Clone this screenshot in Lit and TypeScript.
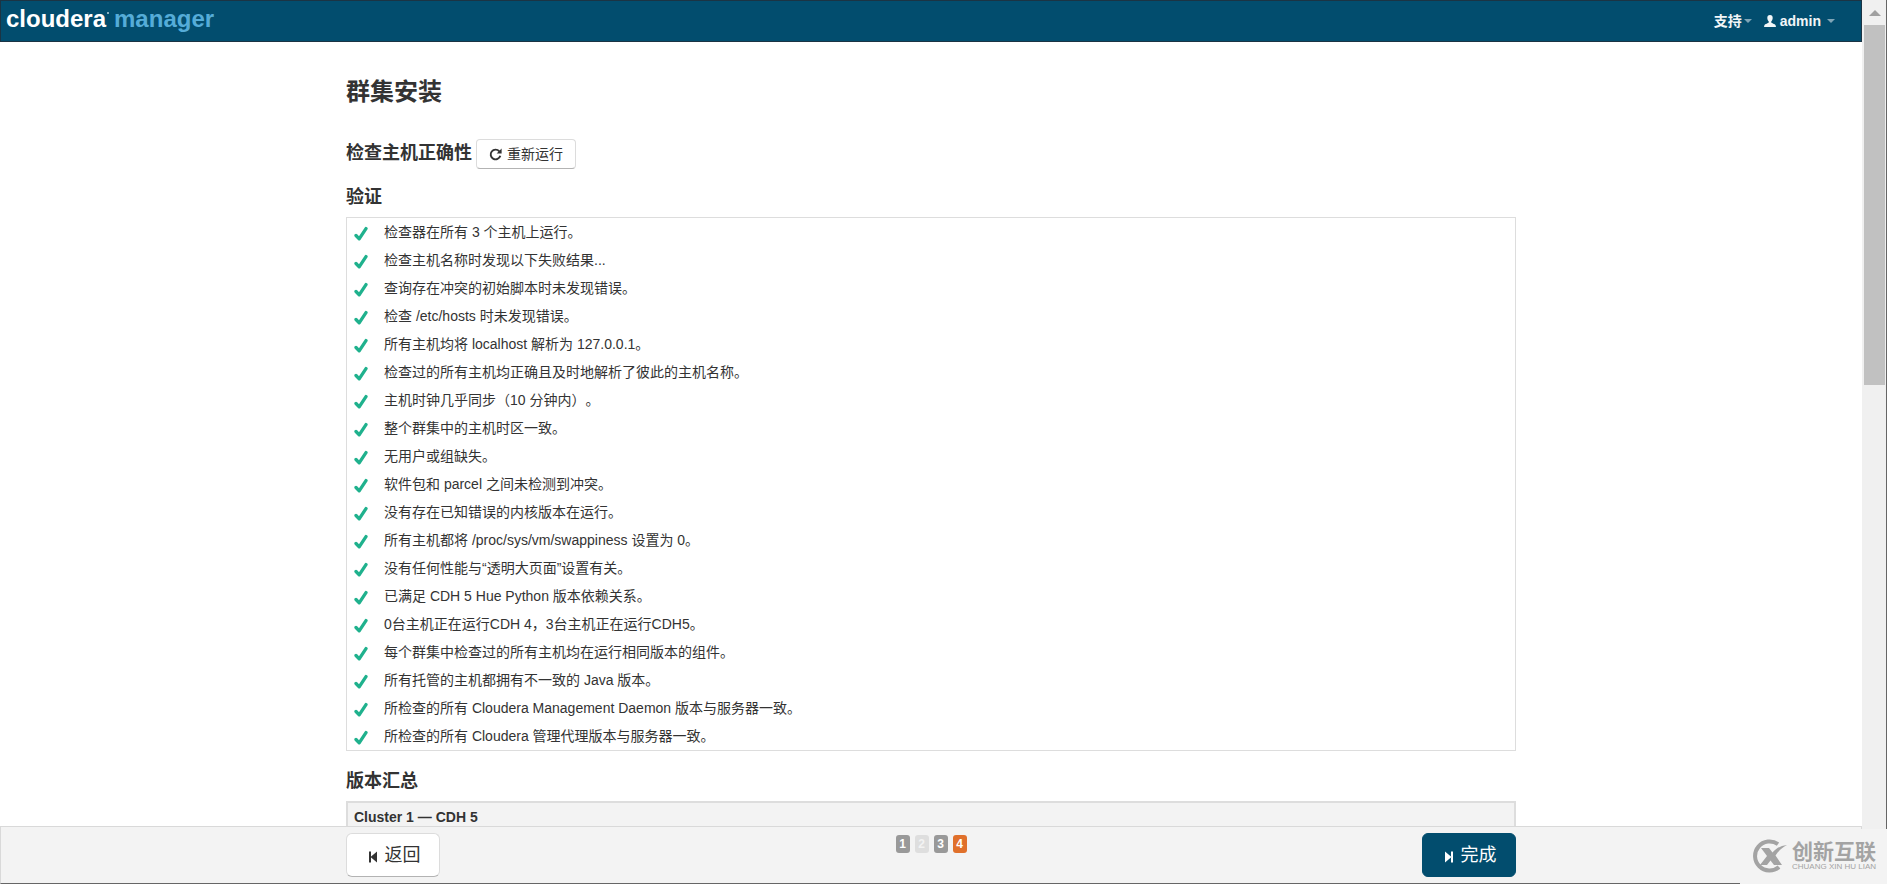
import { LitElement, html, css, svg } from "lit";
import { customElement, state } from "lit/decorators.js";

const CHECKS: string[] = [
  "检查器在所有 3 个主机上运行。",
  "检查主机名称时发现以下失败结果...",
  "查询存在冲突的初始脚本时未发现错误。",
  "检查 /etc/hosts 时未发现错误。",
  "所有主机均将 localhost 解析为 127.0.0.1。",
  "检查过的所有主机均正确且及时地解析了彼此的主机名称。",
  "主机时钟几乎同步（10 分钟内）。",
  "整个群集中的主机时区一致。",
  "无用户或组缺失。",
  "软件包和 parcel 之间未检测到冲突。",
  "没有存在已知错误的内核版本在运行。",
  "所有主机都将 /proc/sys/vm/swappiness 设置为 0。",
  "没有任何性能与“透明大页面”设置有关。",
  "已满足 CDH 5 Hue Python 版本依赖关系。",
  "0台主机正在运行CDH 4，3台主机正在运行CDH5。",
  "每个群集中检查过的所有主机均在运行相同版本的组件。",
  "所有托管的主机都拥有不一致的 Java 版本。",
  "所检查的所有 Cloudera Management Daemon 版本与服务器一致。",
  "所检查的所有 Cloudera 管理代理版本与服务器一致。",
];

const STEPS = [
  { label: "1", kind: "done" },
  { label: "2", kind: "skipped" },
  { label: "3", kind: "done" },
  { label: "4", kind: "current" },
];

const tick = html`<svg class="tick" viewBox="0 0 14 16" aria-hidden="true">
  ${svg`<path d="M2 9.500 5.200 12.800 12 2.600" fill="none" stroke="#1fb18d" stroke-width="3.300" stroke-linecap="round" stroke-linejoin="round"/>`}
</svg>`;

const caret = html`<svg class="caret" viewBox="0 0 8 4" aria-hidden="true"><path d="M0 0h8L4 4z" fill="#7fa5b7" /></svg>`;

@customElement("app-root")
export class AppRoot extends LitElement {
  @state() private checks = CHECKS;

  static styles = css`
    :host {
      display: grid;
      grid-template-columns: minmax(0, 1fr) 25px;
      height: 100vh;
      position: relative;
      overflow: hidden;
      background: #fff;
      color: #333;
      font: 14px/20px "Liberation Sans", "Noto Sans CJK SC", sans-serif;
      text-spacing-trim: space-all;
    }
    * {
      box-sizing: border-box;
    }
    .page {
      display: flex;
      flex-direction: column;
      min-height: 0;
    }
    .navbar {
      flex: none;
      display: flex;
      align-items: center;
      justify-content: space-between;
      height: 42px;
      padding: 0 26px 0 5px;
      background: #024d6e;
      border: 1px solid #1b3444;
    }
    .brand {
      display: flex;
      gap: 5px;
      padding-bottom: 4px;
      color: #fff;
      font: 700 24px/28px "Liberation Sans", sans-serif;
      text-decoration: none;
    }
    .brand-main {
      display: flex;
    }
    .reg {
      width: 2px;
      height: 2px;
      margin: 7px 0 0 1px;
      border-radius: 1px;
      background: #b9d2dd;
    }
    .brand-sub {
      color: #55acd8;
    }
    .menu {
      display: flex;
      gap: 12px;
    }
    .menu a {
      display: flex;
      align-items: center;
      color: #f2f6f8;
      font-weight: 700;
      text-decoration: none;
    }
    .caret {
      width: 8px;
      height: 4px;
      margin-left: 2px;
    }
    .admin .caret {
      margin-left: 6px;
    }
    .user {
      width: 12px;
      height: 12px;
      margin-right: 4px;
    }
    .scroll {
      flex: 1;
      min-height: 0;
      overflow: hidden;
    }
    .container {
      max-width: 1170px;
      margin: 0 auto;
    }
    h1,
    h2,
    h3 {
      margin: 0;
      font-weight: 700;
    }
    h1 {
      padding-top: 30px;
      font-size: 24px;
      line-height: 40px;
    }
    .check-head {
      display: flex;
      align-items: center;
      gap: 4px;
      margin: 27px 0 8px;
    }
    h2,
    h3 {
      font-size: 18px;
      line-height: 40px;
    }
    .check-head h2 {
      line-height: 26px;
      padding-bottom: 3px;
    }
    button {
      display: inline-flex;
      align-items: center;
      justify-content: center;
      color: #333;
      background: #fff;
      border: 1px solid #dcdcdc;
      border-bottom-color: #b3b3b3;
      font-family: inherit;
    }
    .rerun {
      gap: 5px;
      height: 30px;
      padding: 0 12px;
      border-radius: 4px;
      font-size: 14px;
      line-height: 20px;
    }
    .rerun svg {
      width: 13px;
      height: 13px;
    }
    .checks {
      margin: 0 0 10px;
      padding: 0;
      list-style: none;
      border: 1px solid #ddd;
    }
    .checks li {
      display: flex;
      align-items: flex-start;
      gap: 16px;
      height: 28px;
      padding: 4px 7px;
    }
    .tick {
      flex: none;
      width: 14px;
      height: 16px;
      margin-top: 4px;
    }
    table {
      width: 100%;
      border: 2px solid #ddd;
      border-collapse: separate;
      border-spacing: 0;
    }
    th {
      padding: 4px 6px;
      text-align: left;
      background: #f3f3f3;
    }
    .footer {
      flex: none;
      height: 58px;
      padding-top: 6px;
      background: #f3f3f3;
      border: 1px solid #d9d9d9;
      border-bottom-color: #666;
    }
    .actions {
      display: grid;
      grid-template-columns: 1fr auto 1fr;
      align-items: start;
    }
    .actions button {
      gap: 8px;
      height: 44px;
      width: 94px;
      padding: 0 0 0 3px;
      border-radius: 6px;
      font-size: 18px;
      line-height: 24px;
    }
    .actions button svg {
      width: 8px;
      height: 12px;
      margin-top: 3px;
    }
    .actions .finish {
      justify-self: end;
      color: #fff;
      background: #024d6e;
      border-color: #024d6e;
    }
    .steps {
      display: flex;
      gap: 5px;
      margin: 2px 0 0;
      padding: 0;
      list-style: none;
    }
    .steps li {
      width: 14px;
      height: 18px;
      border-radius: 3px;
      color: #fff;
      background: #999;
      font-size: 12px;
      font-weight: 700;
      line-height: 18px;
      text-align: center;
    }
    .steps .skipped {
      color: #f3f3f3;
      background: #dedede;
    }
    .steps .current {
      background: #e0702b;
    }
    .track {
      display: flex;
      flex-direction: column;
      padding: 0 1px 0 2px;
      background: #f0f0f0;
      border-right: 1px solid #666;
    }
    .arrow {
      flex: none;
      display: flex;
      align-items: center;
      justify-content: center;
      height: 25px;
    }
    .arrow svg {
      width: 12px;
      height: 6px;
    }
    .thumb {
      height: 42%;
      max-height: 360px;
      background: #c1c1c1;
    }
    .watermark {
      position: absolute;
      right: 0;
      bottom: 0;
      display: flex;
      align-items: center;
      gap: 5px;
      width: 147px;
      height: 55px;
      padding: 0 0 2px 12px;
      background: #f3f3f3;
      color: #a3a3a3;
    }
    .watermark svg {
      flex: none;
      width: 35px;
      height: 34px;
    }
    .mark-text {
      display: flex;
      flex-direction: column;
      white-space: nowrap;
    }
    .mark-cn {
      font-size: 21px;
      font-weight: 700;
      line-height: 23px;
    }
    .mark-en {
      font-size: 8px;
      line-height: 8px;
    }
  `;

  render() {
    return html`
      <div class="page">
        <header class="navbar">
          <a class="brand" href="#"
            ><span class="brand-main">cloudera<span class="reg"></span></span><span class="brand-sub">manager</span></a
          >
          <nav class="menu">
            <a href="#">支持${caret}</a>
            <a class="admin" href="#">
              <svg class="user" viewBox="0 0 12 12" aria-hidden="true">
                <path
                  fill="#f2f6f8"
                  d="M6 0C4.200 0 3.200 1.300 3.300 3c.1 1.500.6 2.600 1.400 3.300v1.200C4.500 8.300 1 8.800.4 10.300L0 12h12l-.4-1.700C11 8.800 7.500 8.300 7.300 7.500V6.300C8.100 5.600 8.600 4.500 8.700 3 8.800 1.300 7.800 0 6 0z"
                />
              </svg>
              admin${caret}
            </a>
          </nav>
        </header>
        <main class="scroll">
          <div class="container">
            <h1>群集安装</h1>
            <div class="check-head">
              <h2>检查主机正确性</h2>
              <button class="rerun" type="button">
                <svg viewBox="0 0 13 13" aria-hidden="true">
                  <path d="M10.300 3.300A4.900 4.900 0 1 0 11.300 7.800" fill="none" stroke="#333" stroke-width="1.900" />
                  <path d="M12.600.6v5H7.600z" fill="#333" />
                </svg>
                重新运行
              </button>
            </div>
            <h3>验证</h3>
            <ul class="checks">
              ${this.checks.map((text) => html`<li>${tick}<span>${text}</span></li>`)}
            </ul>
            <h3>版本汇总</h3>
            <table>
              <thead>
                <tr>
                  <th scope="col">Cluster 1 — CDH 5</th>
                </tr>
              </thead>
            </table>
          </div>
        </main>
        <footer class="footer">
          <div class="container actions">
            <button type="button">
              <svg viewBox="0 0 8 12" aria-hidden="true">
                <path d="M0 .5h2v11H0zM1.500 6 8 .5v11z" fill="#333" />
              </svg>
              返回
            </button>
            <ol class="steps">
              ${STEPS.map((s) => html`<li class=${s.kind}>${s.label}</li>`)}
            </ol>
            <button class="finish" type="button">
              <svg viewBox="0 0 8 12" aria-hidden="true">
                <path d="M6 .5h2v11H6zM6.500 6 0 .5v11z" fill="#fff" />
              </svg>
              完成
            </button>
          </div>
        </footer>
      </div>
      <div class="track" aria-hidden="true">
        <div class="arrow">
          <svg viewBox="0 0 12 6"><path d="M0 6 6 0l6 6z" fill="#a0a0a0" /></svg>
        </div>
        <div class="thumb"></div>
      </div>
      <div class="watermark">
        <svg viewBox="0 0 35 34" aria-hidden="true">
          <path d="M26 5.200A14.500 14.500 0 1 0 27 28" fill="none" stroke="#a3a3a3" stroke-width="4" />
          <path d="M9 9h8l3.500 4.500C24 9.500 28 7 35 6c-5 2.500-8.500 6-11.500 10.500L30 26h-8l-3.500-4.500L15 26H8l7-9z" fill="#a3a3a3" />
        </svg>
        <div class="mark-text">
          <span class="mark-cn">创新互联</span>
          <span class="mark-en">CHUANG XIN HU LIAN</span>
        </div>
      </div>
    `;
  }
}
